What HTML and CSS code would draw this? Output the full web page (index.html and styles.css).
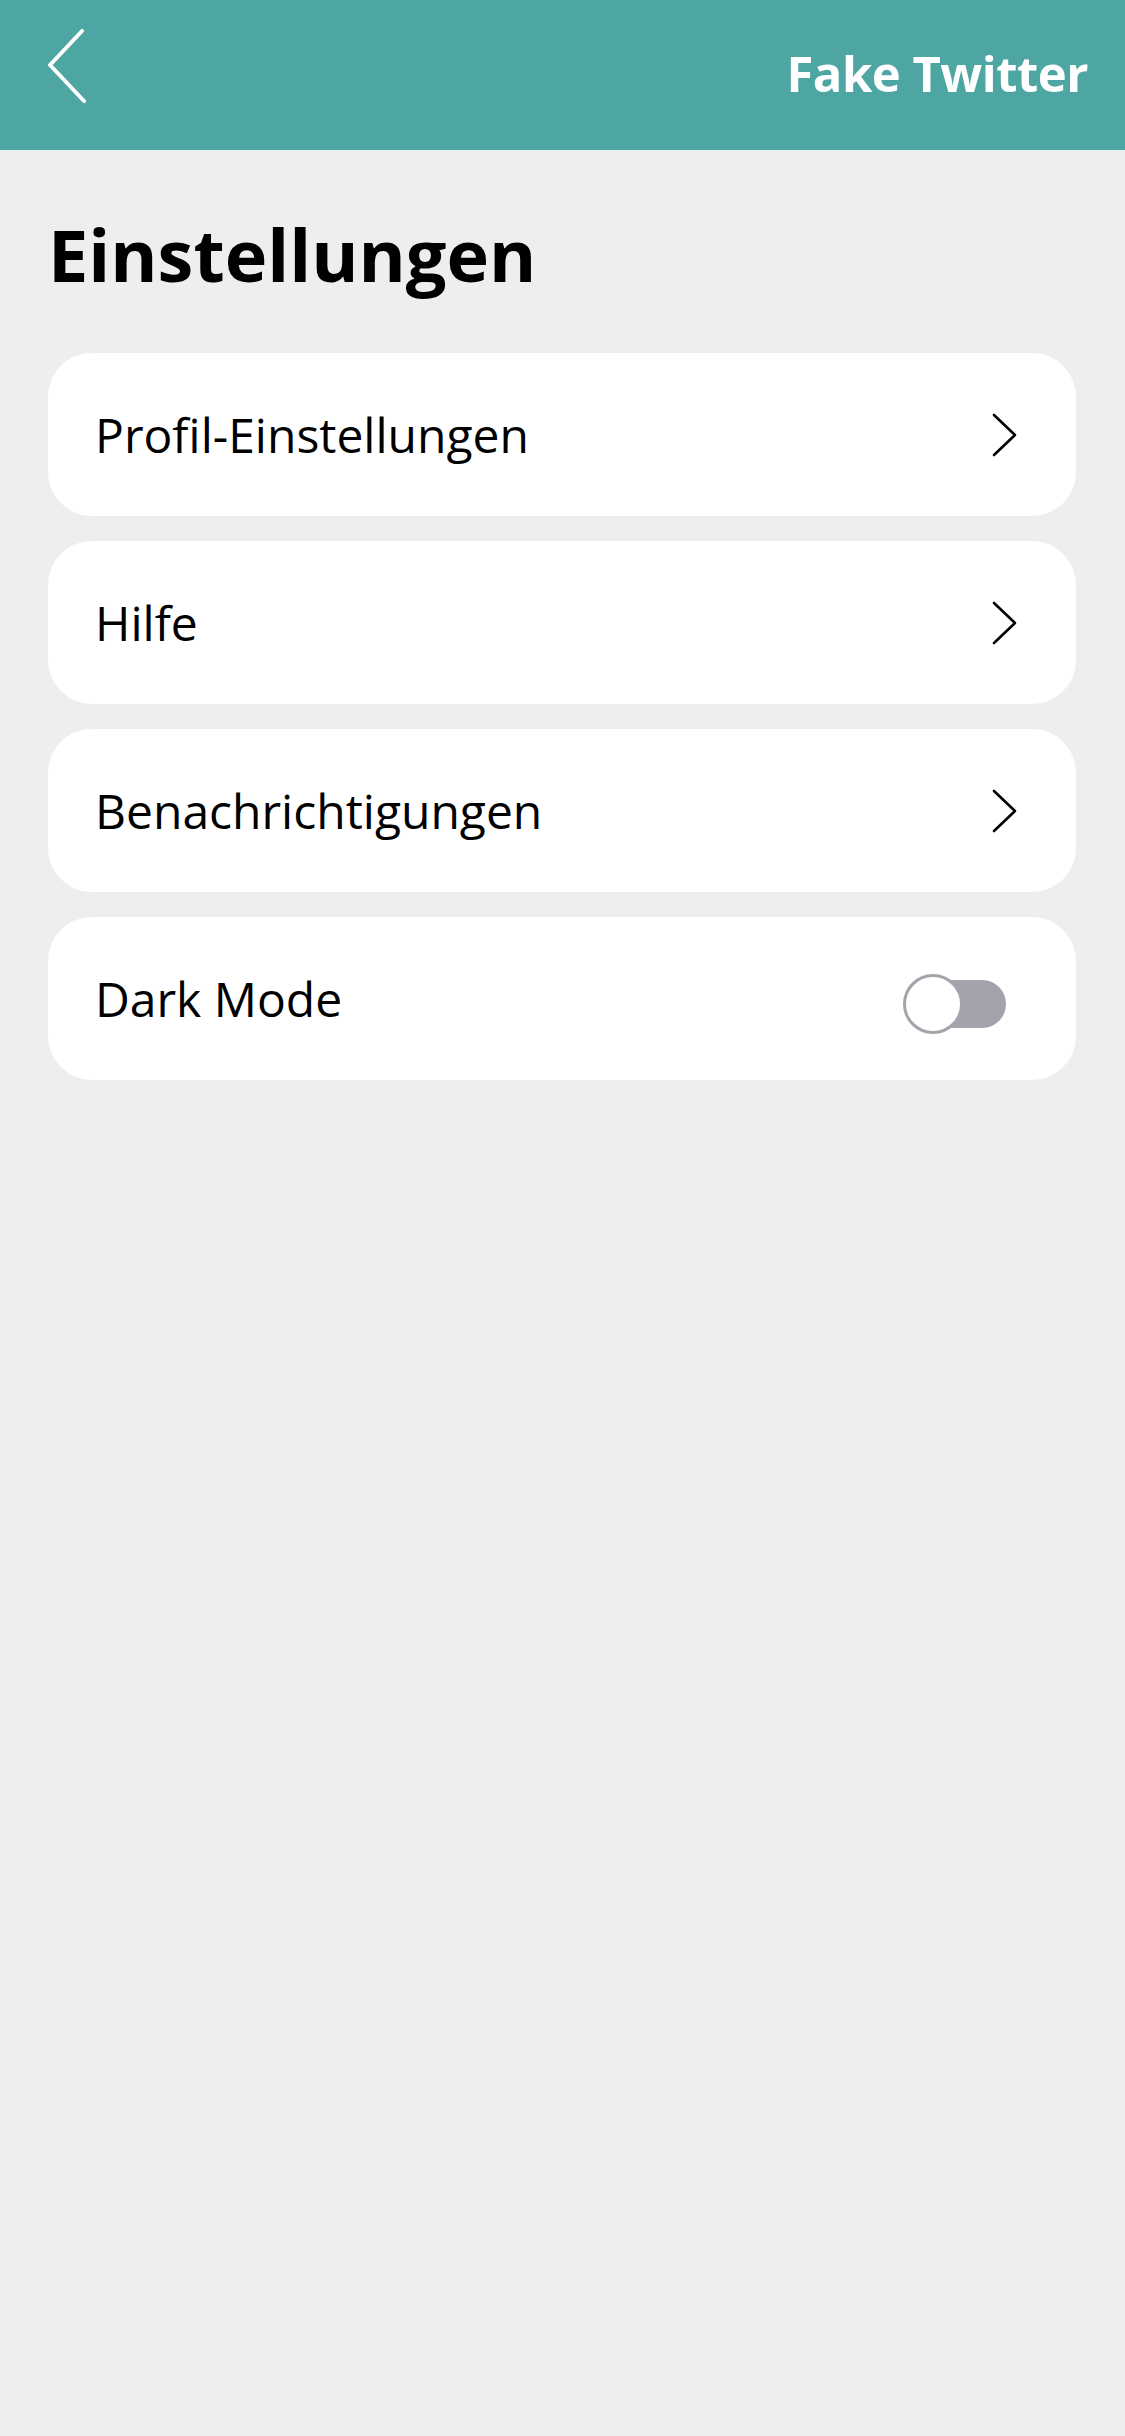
FILE: index.html
```html
<!DOCTYPE html>
<html lang="de">
<head>
<meta charset="utf-8">
<title>Einstellungen</title>
<link rel="stylesheet" href="styles.css">
</head>
<body>
<header class="topbar">
  <svg class="back" width="44" height="76" viewBox="0 0 44 76">
    <polyline points="36,2 4,36 38,72" fill="none" stroke="#fff" stroke-width="4" stroke-linecap="round" stroke-linejoin="round"/>
  </svg>
  <div class="brand">Fake Twitter</div>
</header>
<main class="content">
  <h1 class="title">Einstellungen</h1>
  <div class="list">
    <div class="card">
      <span class="label">Profil-Einstellungen</span>
      <svg class="chev" width="26" height="44" viewBox="0 0 26 44"><polyline points="2,2 23,22 2,42" fill="none" stroke="#000" stroke-width="2.6" stroke-linecap="round" stroke-linejoin="round"/></svg>
    </div>
    <div class="card">
      <span class="label">Hilfe</span>
      <svg class="chev" width="26" height="44" viewBox="0 0 26 44"><polyline points="2,2 23,22 2,42" fill="none" stroke="#000" stroke-width="2.6" stroke-linecap="round" stroke-linejoin="round"/></svg>
    </div>
    <div class="card">
      <span class="label">Benachrichtigungen</span>
      <svg class="chev" width="26" height="44" viewBox="0 0 26 44"><polyline points="2,2 23,22 2,42" fill="none" stroke="#000" stroke-width="2.6" stroke-linecap="round" stroke-linejoin="round"/></svg>
    </div>
    <div class="card">
      <span class="label">Dark Mode</span>
      <div class="toggle"><div class="knob"></div></div>
    </div>
  </div>
</main>
</body>
</html>
```
FILE: styles.css
```css
html, body {
  margin: 0;
  padding: 0;
}
body {
  background: #eeeeee;
  font-family: "Open Sans", "Noto Sans", sans-serif;
  color: #000;
  min-height: 2436px;
}
.topbar {
  height: 150px;
  background: #4ea6a3;
  display: flex;
  align-items: center;
  justify-content: space-between;
  padding: 0 37px 0 46px;
  box-sizing: border-box;
}
.back {
  display: block;
  margin-top: -16px;
}
.brand {
  color: #fff;
  font-weight: 700;
  font-size: 49px;
  letter-spacing: -0.5px;
  margin-top: -4px;
}
.content {
  padding: 0 49px 0 48px;
}
.title {
  margin: 61px 0 56px 0;
  font-size: 72px;
  line-height: 86px;
  font-weight: 700;
}
.list {
  display: flex;
  flex-direction: column;
  gap: 25px;
}
.card {
  height: 163px;
  background: #fff;
  border-radius: 44px;
  display: flex;
  align-items: center;
  justify-content: space-between;
  padding: 0 58px 0 47px;
  box-sizing: border-box;
}
.label {
  font-size: 48px;
  line-height: 60px;
  margin-top: 1px;
}
.chev {
  display: block;
}
.toggle {
  position: relative;
  width: 96px;
  height: 48px;
  border-radius: 24px;
  background: #a3a3ab;
  margin-right: 12px;
  margin-top: 10px;
}
.knob {
  position: absolute;
  left: -7px;
  top: -6px;
  width: 60px;
  height: 60px;
  border-radius: 50%;
  background: #fff;
  border: 3px solid #a3a3ab;
  box-sizing: border-box;
}
```
